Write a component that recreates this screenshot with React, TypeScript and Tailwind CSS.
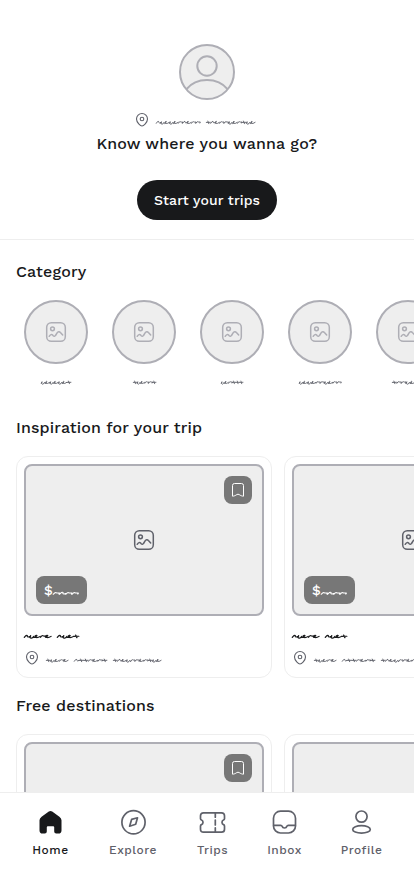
import React from "react";

const strokes: Record<string, string> = {
  n: "l1.4 -1.8 q1.4 -.5 1.1 .8 q.4 1.3 2.1 .2",
  e: "q2.4 -1.8 1 -2.1 q-1.6 .5 -.6 2.1 q1.6 .8 4 -.9",
  u: "l.8 -1.6 q-1.2 2.5 .6 2.5 q1.8 -.5 2 -1.8 q0 1.3 1.2 .9",
  r: "q1.2 -2.1 2 -1.6 q.6 .6 2.6 .3 l-.4 1",
  x: "m0 -.9 l4.2 -.1 m-2.6 -1.2 l1 2.6",
};

function Scribble({ word, width, weight = 0.95 }: { word: string; width: number; weight?: number }) {
  const step = width / word.length;
  return (
    <svg width={width} height={8} viewBox={`0 0 ${width} 8`} className="block shrink-0 overflow-visible" aria-hidden>
      {word.split("").map((c, i) => (
        <path
          key={i}
          d={`M0 5 ${strokes[c]}`}
          transform={`translate(${i * step + 0.3} 0.3) scale(${step / 4.6} 1)`}
          fill="none"
          stroke="currentColor"
          strokeWidth={weight}
          strokeLinecap="round"
          strokeLinejoin="round"
        />
      ))}
    </svg>
  );
}

function Pin() {
  return (
    <svg width="16" height="16" viewBox="0 0 16 16" fill="none" stroke="currentColor" strokeWidth="1.1" className="shrink-0">
      <path d="M8 14C6.6 14 2.5 10.4 2.5 7a5.5 5.5 0 0 1 11 0c0 3.4-4.1 7-5.5 7Z" />
      <circle cx="8" cy="7" r="1.8" />
    </svg>
  );
}

function Picture() {
  return (
    <svg width="24" height="24" viewBox="0 0 24 24" fill="none" stroke="currentColor" strokeWidth="1.5" strokeLinecap="round" strokeLinejoin="round">
      <rect x="2.7" y="2.7" width="18.6" height="18.6" rx="4.6" />
      <circle cx="8.5" cy="8.8" r="1.9" />
      <path d="M5.2 16.3c1.2-1.9 2.5-2.2 3.4-1.2l.6.7c.7.7 1.8.6 2.3-.3l1.6-2.6c.9-1.4 2.3-1.6 3.3-.4l2.3 2.5" />
    </svg>
  );
}

function Section({ title, children }: { title: string; children: React.ReactNode }) {
  return (
    <section>
      <h2 className="px-4 text-base font-medium leading-6 tracking-[0.15px]">{title}</h2>
      {children}
    </section>
  );
}

function TripCard({ priced }: { priced: boolean }) {
  return (
    <article className="h-[222px] w-64 shrink-0 rounded-xl border border-[#eeeeee] p-[7px]">
      <div className="relative flex h-[152px] items-center justify-center rounded-lg border-2 border-[#aeaeb5] bg-[#eeeeee] text-[#5f616a]">
        <Picture />
        <div className="absolute right-2.5 top-2.5 flex size-7 items-center justify-center rounded-lg bg-[#777777] text-white">
          <svg width="16" height="16" viewBox="0 0 16 16" fill="none" stroke="currentColor" strokeWidth="1" strokeLinejoin="round">
            <path d="M2.5 3.5Q2.5 1.5 4.5 1.5h7Q13.5 1.5 13.5 3.5v10.7c-1.3 0-3.1-.7-4.3-1.6q-1.2-.8-2.4 0c-1.2.9-3 1.6-4.3 1.6Z" />
          </svg>
        </div>
        {priced && (
          <div className="absolute bottom-2.5 left-2.5 flex h-7 w-[51px] items-center rounded-lg bg-[#777777] pl-2 text-sm font-medium text-white">
            <span className="w-[9px]">$</span>
            <div className="mt-1.5">
              <Scribble word="rnrr" width={25} weight={1} />
            </div>
          </div>
        )}
      </div>
      <div className="mt-4 flex gap-1.5 text-[#18191b]">
        <Scribble word="nuere" width={27} weight={1.15} />
        <Scribble word="nuex" width={22} weight={1.15} />
      </div>
      <div className="mt-2.5 flex items-center text-[#5f616a]">
        <Pin />
        <div className="ml-1.5 mt-1 flex gap-1.5">
          <Scribble word="xuere" width={22} />
          <Scribble word="nxxrerx" width={33} />
          <Scribble word="xneurrerxue" width={48} />
        </div>
      </div>
    </article>
  );
}

const categories = [
  { word: "ueueuex", width: 30 },
  { word: "xuerrx", width: 23 },
  { word: "uerxxx", width: 22 },
  { word: "ueuerruerr", width: 42 },
  { word: "xrruerr", width: 32 },
];

const trips = [
  { title: "Inspiration for your trip", spacing: "pt-[30px]" },
  { title: "Free destinations", spacing: "pt-4" },
];

const tabs = [
  {
    label: "Home",
    width: "w-[37px]",
    icon: (
      <path
        d="M10.8 1.5Q12.5.3 14.2 1.5l7.2 5.2Q23.5 8.3 23.5 10.3v10.1q0 3.1-3.1 3.1h-2.2q-2 0-2-2v-4.2q0-1-1-1H9.8q-1 0-1 1v4.2q0 2-2 2H4.6q-3.1 0-3.1-3.1V10.3q0-2 2.1-3.6Z"
        fill="#18191b"
        stroke="none"
      />
    ),
  },
  {
    label: "Explore",
    width: "w-12",
    icon: (
      <>
        <circle cx="12.5" cy="12.3" r="11.6" />
        <path d="m10.6 9.4 5.9-1.6-1.8 6.5-6.1 1.9Z" />
      </>
    ),
  },
  {
    label: "Trips",
    width: "w-[31px]",
    icon: (
      <>
        <path d="M3.5 2.8h18Q24.5 2.8 24.5 5.8v2.9q0 1-1 1.3a2.5 2.5 0 0 0 0 4.6q1 .3 1 1.3v3.3q0 3-3 3h-18q-3 0-3-3v-3.3q0-1 1-1.3a2.5 2.5 0 0 0 0-4.6q-1-.3-1-1.3V5.8q0-3 3-3Z" />
        <path d="M15.3 3v4.2M15.3 10v5M15.3 17.8V22" />
      </>
    ),
  },
  {
    label: "Inbox",
    width: "w-[33px]",
    icon: (
      <>
        <rect x="1.5" y="1.2" width="22" height="21.8" rx="7" />
        <path d="M1.7 15.3h6.9q1.2 0 1.5 1 .5 1.7 2.4 1.7t2.4-1.7q.3-1 1.5-1h6.9" />
      </>
    ),
  },
  {
    label: "Profile",
    width: "w-[41px]",
    icon: (
      <>
        <circle cx="12.5" cy="6.6" r="5.6" />
        <ellipse cx="12.5" cy="19.4" rx="8.8" ry="3.7" />
      </>
    ),
  },
];

export default function App() {
  return (
    <div className="flex h-[896px] w-[414px] flex-col overflow-hidden bg-white font-['Work_Sans','Inter',sans-serif] text-[#18191b]">
      <main className="min-h-0 flex-1 overflow-hidden">
        <header className="flex h-60 flex-col items-center border-b border-[#eeeeee] pt-11">
          <svg width="56" height="56" viewBox="0 0 56 56" fill="none" stroke="#aeaeb5" strokeWidth="2">
            <circle cx="28" cy="28" r="27" fill="#eeeeee" />
            <circle cx="28" cy="22" r="9.7" />
            <path d="M7.5 45.2C12 39.5 19.5 36 28 36s16 3.5 20.5 9.2" />
          </svg>
          <div className="mt-3 flex h-4 items-center text-[#5f616a]">
            <Pin />
            <div className="ml-1.5 mr-[25px] mt-1 flex gap-1.5">
              <Scribble word="nueuernerr" width={44} />
              <Scribble word="xnerruerxue" width={49} />
            </div>
          </div>
          <h1 className="mt-1 text-base font-medium leading-6 tracking-[0.15px]">Know where you wanna go?</h1>
          <button className="mt-6 h-10 w-[140px] rounded-full bg-[#18191b] text-sm font-medium tracking-[0.1px] text-white">
            Start your trips
          </button>
        </header>

        <div className="pt-5">
          <Section title="Category">
            <div className="flex gap-6 px-6 pt-4">
              {categories.map((category) => (
                <div key={category.word} className="flex w-16 shrink-0 flex-col items-center">
                  <div className="flex size-16 items-center justify-center rounded-full border-2 border-[#aeaeb5] bg-[#eeeeee] text-[#aeaeb5]">
                    <Picture />
                  </div>
                  <div className="mt-3.5 text-[#5f616a]">
                    <Scribble word={category.word} width={category.width} />
                  </div>
                </div>
              ))}
            </div>
          </Section>
        </div>

        {trips.map((group, i) => (
          <div key={group.title} className={group.spacing}>
            <Section title={group.title}>
              <div className="flex gap-3 px-4 pt-4">
                <TripCard priced={i === 0} />
                <TripCard priced={i === 0} />
              </div>
            </Section>
          </div>
        ))}
      </main>

      <nav className="flex h-[104px] shrink-0 justify-center gap-10 border-t border-[#eeeeee] bg-white pt-[17px]">
        {tabs.map((tab, i) => (
          <a key={tab.label} className={`flex flex-col items-center ${tab.width} ${i === 0 ? "text-[#18191b]" : "text-[#5f616a]"}`}>
            <svg width="25" height="25" viewBox="0 0 25 25" fill="none" stroke="currentColor" strokeWidth="1.7" strokeLinecap="round" strokeLinejoin="round" className="shrink-0 overflow-visible">
              {tab.icon}
            </svg>
            <span className="mt-[7px] whitespace-nowrap text-xs font-medium leading-4 tracking-[0.5px]">{tab.label}</span>
          </a>
        ))}
      </nav>
    </div>
  );
}
